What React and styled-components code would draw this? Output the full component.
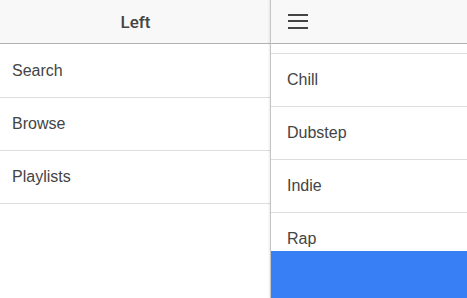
import React from 'react';
import styled, { createGlobalStyle } from 'styled-components';

const GlobalStyle = createGlobalStyle`
    html, body {
        margin: 0;
        padding: 0;
        height: 100%;
        overflow: hidden;
        background: #ffffff;
        font-family: "Liberation Sans", Arial, sans-serif;
        color: #444444;
    }
    #root {
        height: 100%;
    }
`

const Shell = styled.div`
    display: flex;
    width: 100%;
    height: 100vh;
    overflow: hidden;
`

const Pane = styled.section`
    display: flex;
    flex-direction: column;
    height: 100%;
    background: #ffffff;
    ${({ $menu }) => $menu ? `
        width: 270px;
        flex: none;
    ` : `
        flex: 1;
        min-width: 0;
        border-left: 1px solid #c4c4c4;
        box-shadow: -1px 0 2px rgba(0, 0, 0, 0.08);
    `}
`

const Bar = styled.header`
    display: flex;
    align-items: center;
    justify-content: ${({ $center }) => $center ? 'center' : 'flex-start'};
    height: 43px;
    flex: none;
    padding: 0 15px;
    background: #f8f8f8;
    border-bottom: 1px solid #b2b2b2;
    box-sizing: content-box;
`

const Title = styled.h1`
    margin: 0 0 0 1px;
    font-family: Roboto, "Liberation Sans", sans-serif;
    font-size: 17px;
    font-weight: 500;
    color: #444444;
`

const MenuButton = styled.button`
    display: flex;
    align-items: center;
    padding: 0;
    margin: 0 0 0 1px;
    border: none;
    background: transparent;
    color: #444444;
    cursor: pointer;
`

const Scroll = styled.div`
    flex: 1;
    overflow: hidden;
    padding-top: ${({ $offset }) => $offset || 0}px;
`

const List = styled.ul`
    list-style: none;
    margin: 0;
    padding: 0;
    border-top: ${({ $bordered }) => $bordered ? '1px solid #dddddd' : 'none'};
`

const Item = styled.li`
    display: flex;
    align-items: center;
    height: ${({ $tall }) => $tall ? 53 : 52}px;
    padding: 0 ${({ $pad }) => $pad}px;
    border-bottom: 1px solid #dddddd;
    font-size: 16px;
    color: #444444;
`

const Footer = styled.footer`
    height: 47px;
    flex: none;
    background: #387ef5;
`

const Hamburger = () => (
    <svg width="22" height="18" viewBox="0 0 22 18">
        <rect x="1" y="1" width="20" height="2" fill="#444" />
        <rect x="1" y="7" width="20" height="2" fill="#444" />
        <rect x="1" y="14" width="20" height="2" fill="#444" />
    </svg>
)

const menuLinks = ['Search', 'Browse', 'Playlists']
const genres = ['Chill', 'Dubstep', 'Indie', 'Rap']

const App = () => {
    return (
        <>
            <GlobalStyle />
            <Shell>
                <Pane $menu>
                    <Bar $center>
                        <Title>Left</Title>
                    </Bar>
                    <Scroll>
                        <List>
                            {menuLinks.map((link, i) => <Item key={link} $pad={12} $tall={i === 0}>{link}</Item>)}
                        </List>
                    </Scroll>
                </Pane>
                <Pane>
                    <Bar>
                        <MenuButton aria-label="Menu"><Hamburger /></MenuButton>
                    </Bar>
                    <Scroll $offset={9}>
                        <List $bordered>
                            {genres.map(genre => <Item key={genre} $pad={16}>{genre}</Item>)}
                        </List>
                    </Scroll>
                    <Footer />
                </Pane>
            </Shell>
        </>
    )
}

export default App
